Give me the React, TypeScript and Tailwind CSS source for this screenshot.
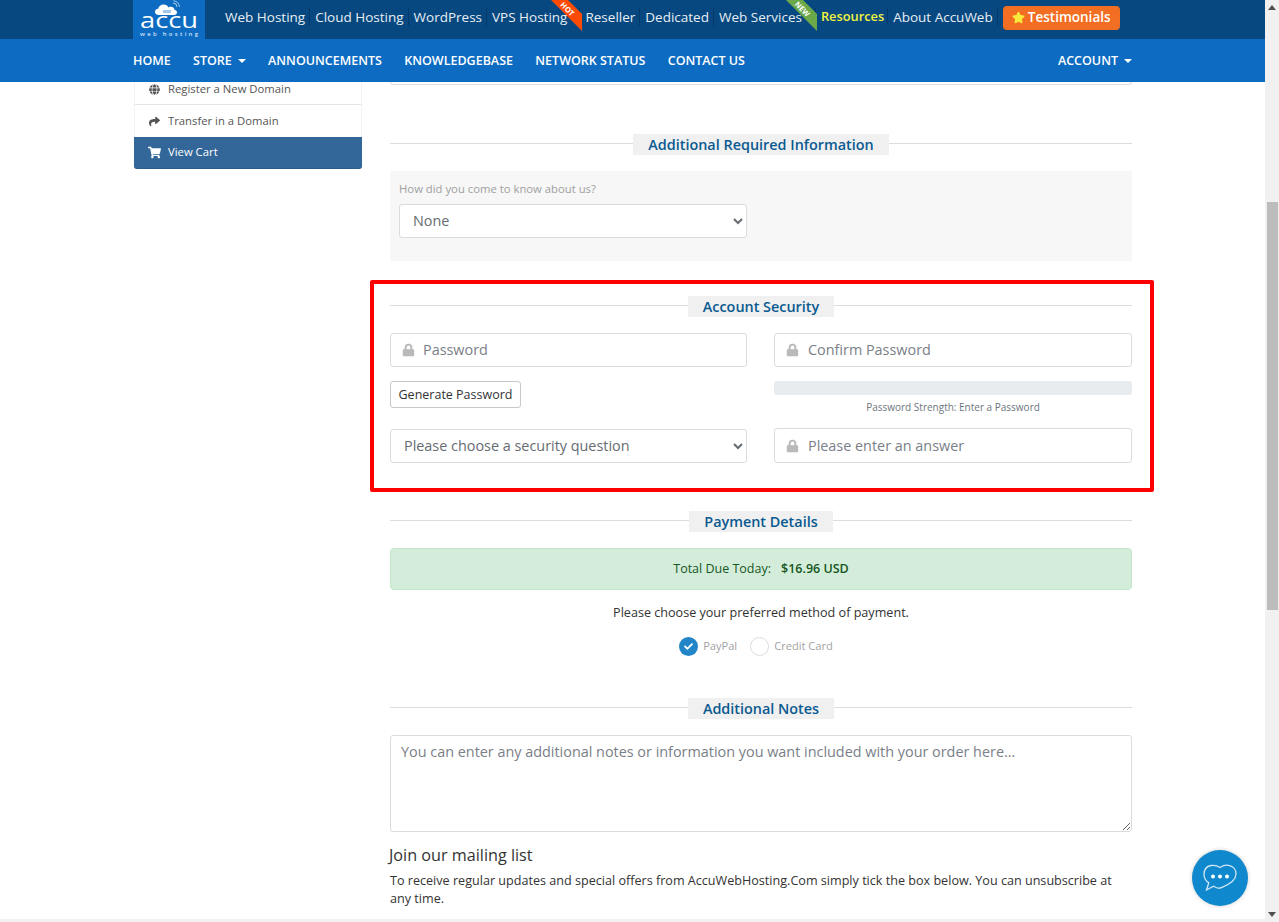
import React from "react";
import { FaLock, FaGlobe, FaShare, FaShoppingCart, FaStar, FaCheck } from "react-icons/fa";

const top = [
  { t: "Web Hosting", c: "" },
  { t: "Cloud Hosting", c: "" },
  { t: "WordPress", c: "" },
  { t: "VPS Hosting", c: "pr-[12px]" },
  { t: "Reseller", c: "" },
  { t: "Dedicated", c: "" },
  { t: "Web Services", c: "pr-[13px]" },
];

function Caret() {
  return <span className="inline-block ml-[6px] align-[2px] border-t-[4px] border-x-[4px] border-t-white border-x-transparent" />;
}

function Heading({ label }: { label: string }) {
  return (
    <div className="flex items-center h-[21px]">
      <div className="flex-1 h-px bg-[#dddddd] mb-[3px]" />
      <div className="h-[21px] px-[15px] bg-[#f0f0f0] text-[14.400px] leading-[21px] font-semibold text-[#0a5a90]">{label}</div>
      <div className="flex-1 h-px bg-[#dddddd] mb-[3px]" />
    </div>
  );
}

function LockInput({ placeholder, className, inputClass }: { placeholder: string; className: string; inputClass: string }) {
  return (
    <div className={"relative " + className}>
      <FaLock className="absolute left-[12px] top-1/2 -translate-y-1/2 text-[#b9b9b9] text-[13px]" />
      <input
        placeholder={placeholder}
        className={"w-full h-full pr-3 bg-white border border-[#dcdcdc] rounded-[3px] text-[14.400px] placeholder:text-[#7a8087] outline-none " + inputClass}
      />
    </div>
  );
}

function Logo() {
  return (
    <svg viewBox="0 0 72 39" className="w-[72px] h-[39px] bg-[#0d6cc2] shrink-0">
      <path d="M26 15c-3 0-4-1.500-4-3.200 0-1.800 1.400-3 3.200-3 .4-2.600 2.800-4.400 5.300-4.400 2.300 0 4.200 1.200 5 3 .8-.5 1.500-.6 2.300-.6 2 0 3.700 1.500 3.800 3.300 1.400.2 2.400 1.200 2.400 2.500 0 1.400-1.300 2.400-3 2.400z" fill="#ffffff" />
      <rect x="30" y="10" width="8" height="3" fill="#9fc8ea" />
      <path d="M40 3a4 4 0 0 1 4 4M40.500 .8a6.500 6.500 0 0 1 6 6" stroke="#cfe3f5" strokeWidth="0.800" fill="none" />
      <text x="7" y="28" fontFamily="'Open Sans', sans-serif" fontSize="22.500" fontWeight="400" fill="#ffffff" textLength="58" lengthAdjust="spacingAndGlyphs">accu</text>
      <text x="7" y="36" fontFamily="'Open Sans', sans-serif" fontSize="6" fontWeight="600" fill="#cfe3f5" textLength="58" lengthAdjust="spacing">web hosting</text>
    </svg>
  );
}

export default function App() {
  return (
    <div className="relative flex w-[1279px] h-[922px] overflow-hidden bg-white font-['Open_Sans',sans-serif] text-[#333333]">
      <div className="w-[1265px] h-full flex flex-col">
        <header className="h-[39px] shrink-0 bg-[#06487f] pl-[133px] flex items-center relative">
          <Logo />
          <div className="flex items-center ml-[15px] -mt-[5px] text-[13.500px] text-[#e8eef4]">
            {top.map((i) => (
              <span key={i.t} className={"pl-[5px] pr-[4px] leading-[18px] border-r border-[#033a69] " + i.c}>{i.t}</span>
            ))}
            <span className="pl-[5px] pr-[3px] leading-[18px] border-r border-[#033a69] text-[12.800px] font-semibold text-[#f2f53f] -mt-[2px]">Resources</span>
            <span className="pl-[5px] pr-[4px] leading-[18px] border-r border-[#033a69]">About AccuWeb</span>
            <span className="ml-[5px] w-[117px] h-[24px] mt-[2px] pb-[2px] flex items-center justify-center gap-[3px] bg-[#f26e22] rounded-[4px] text-[13.500px] font-semibold text-white">
              <FaStar className="text-[#f7ea3a] text-[13px]" />
              Testimonials
            </span>
          </div>
          <svg className="absolute left-[550px] top-0 w-[33px] h-[32px]" viewBox="0 0 33 32">
            <polygon points="1,0 18,0 32,14 32,31" fill="#fb4b07" />
            <text x="0" y="0" transform="translate(15.500 11) rotate(45)" fontFamily="'Open Sans', sans-serif" fontSize="7.500" fontWeight="700" fill="#ffffff" textAnchor="middle">HOT</text>
          </svg>
          <svg className="absolute left-[785px] top-0 w-[33px] h-[32px]" viewBox="0 0 33 32">
            <polygon points="1,0 18,0 32,14 32,31" fill="#6ba84a" />
            <text x="0" y="0" transform="translate(15.500 11) rotate(45)" fontFamily="'Open Sans', sans-serif" fontSize="7.500" fontWeight="700" fill="#ffffff" textAnchor="middle">NEW</text>
          </svg>
        </header>
        <nav className="h-[43px] shrink-0 bg-[#0d6cc2] pl-[133px] pr-[133px] pt-[2px] flex items-center gap-[22.300px] text-[12.500px] font-semibold text-white">
          <span>HOME</span>
          <span>STORE<Caret /></span>
          <span>ANNOUNCEMENTS</span>
          <span>KNOWLEDGEBASE</span>
          <span>NETWORK STATUS</span>
          <span>CONTACT US</span>
          <span className="ml-auto">ACCOUNT<Caret /></span>
        </nav>
        <main className="flex-1 min-h-0 overflow-hidden flex pl-[134px]">
          <aside className="w-[228px] shrink-0 -mt-[8px] text-[11.300px] text-[#555555]">
            <div className="h-[31px] pl-[14px] flex items-center gap-[8px] border-x border-b border-[#f4f4f4] border-b-[#e6e6e6]">
              <FaGlobe className="text-[11px]" />Register a New Domain
            </div>
            <div className="h-[32px] pl-[14px] flex items-center gap-[8px] border-x border-[#f4f4f4]">
              <FaShare className="text-[11px]" />Transfer in a Domain
            </div>
            <div className="h-[32px] pl-[14px] flex items-center gap-[7px] bg-[#336699] rounded-b-[3px] border-b border-[#2b5a8a] text-white">
              <FaShoppingCart className="text-[13px]" />View Cart
            </div>
          </aside>
          <section className="w-[742px] ml-[28px] shrink-0">
            <div className="h-[3px] border border-t-0 border-[#dedede] rounded-b-[3px]" />
            <div className="mt-[49px]"><Heading label="Additional Required Information" /></div>
            <div className="mt-[16px] h-[90px] bg-[#f7f7f7] pl-[9px] pt-[10px]">
              <div className="text-[11.300px] leading-[16px] text-[#a0a0a0]">How did you come to know about us?</div>
              <select className="block mt-[7px] w-[348px] h-[34px] pl-[9px] pb-[2px] bg-white border border-[#dcdcdc] rounded-[3px] text-[14.400px] text-[#666c72] outline-none">
                <option>None</option>
              </select>
            </div>
            <div className="mt-[19px] -ml-[20px] w-[784px] h-[212px] border-4 border-[#ff0000] rounded-[2px] pt-[12px] pl-[16px] pr-[18px]">
              <Heading label="Account Security" />
              <div className="mt-[16px] grid grid-cols-[357px_358px] gap-x-[27px]">
                <div className="flex flex-col">
                  <LockInput placeholder="Password" className="h-[34px]" inputClass="pl-[32px] pb-[2px]" />
                  <button className="mt-[14px] pt-[1px] self-start w-[131px] h-[27px] bg-white border border-[#c8c8c8] rounded-[3px] text-[12.500px] text-[#333333]">Generate Password</button>
                  <select className="mt-[21px] h-[34px] pl-[9px] pb-[2px] bg-white border border-[#dcdcdc] rounded-[3px] text-[14.400px] text-[#666c72] outline-none">
                    <option>Please choose a security question</option>
                  </select>
                </div>
                <div className="flex flex-col">
                  <LockInput placeholder="Confirm Password" className="h-[34px]" inputClass="pl-[33px] pb-[2px]" />
                  <div className="mt-[14px] h-[14px] bg-[#e9ecef] rounded-[3px]" />
                  <div className="mt-[5px] h-[14px] text-center text-[10px] leading-[14px] text-[#6c757d]">Password Strength: Enter a Password</div>
                  <LockInput placeholder="Please enter an answer" className="mt-[14px] h-[35px]" inputClass="pl-[33px] pb-[1px]" />
                </div>
              </div>
            </div>
            <div className="mt-[19px]"><Heading label="Payment Details" /></div>
            <div className="mt-[16px] h-[42px] flex items-center justify-center gap-[10px] bg-[#d4edda] border border-[#c3e6cb] rounded-[4px] text-[12.500px] text-[#155724]">
              <span>Total Due Today:</span><strong className="font-semibold">$16.96 USD</strong>
            </div>
            <p className="mt-[13px] h-[20px] text-center text-[12.600px] leading-[20px] text-[#333333]">Please choose your preferred method of payment.</p>
            <div className="mt-[13px] h-[20px] pr-[10px] flex items-center justify-center text-[11.100px] text-[#a3a3a3]">
              <span className="w-[19px] h-[19px] rounded-full bg-[#2185c8] flex items-center justify-center"><FaCheck className="text-white text-[9px]" /></span>
              <span className="ml-[5px]">PayPal</span>
              <span className="ml-[13px] w-[19px] h-[19px] rounded-full border border-[#dddddd]" />
              <span className="ml-[5px]">Credit Card</span>
            </div>
            <div className="mt-[42px]"><Heading label="Additional Notes" /></div>
            <textarea
              placeholder="You can enter any additional notes or information you want included with your order here..."
              className="block mt-[16px] w-full h-[97px] px-[10px] py-[5px] bg-white border border-[#dcdcdc] rounded-[3px] text-[14.400px] placeholder:text-[#7a8087] outline-none"
            />
            <h3 className="mt-[11px] -ml-px h-[24px] text-[16.200px] leading-[24px] text-[#333333]">Join our mailing list</h3>
            <p className="mt-[5px] pr-[12px] text-[12.600px] leading-[18px] text-[#333333]">To receive regular updates and special offers from AccuWebHosting.Com simply tick the box below. You can unsubscribe at any time.</p>
          </section>
        </main>
        <div className="h-[3px] shrink-0 bg-[#f2f2f2]" />
      </div>
      <aside className="w-[14px] h-full bg-[#f1f1f1] flex flex-col items-center">
        <span className="mt-[5px] border-b-[5px] border-x-[4px] border-b-[#505050] border-x-transparent" />
        <div className="mt-[192px] w-[11px] h-[408px] bg-[#bcbcbc]" />
        <span className="mt-auto mb-[5px] border-t-[5px] border-x-[4px] border-t-[#505050] border-x-transparent" />
      </aside>
      <div className="absolute left-[1192px] top-[850px] w-[56px] h-[56px] rounded-full bg-[#0f88ce] flex items-center justify-center shadow-[0_0_4px_rgba(0,0,0,0.2)]">
        <svg viewBox="0 0 34 28" className="w-[34px] h-[28px]" fill="none">
          <path d="M17 3.500C14.500 1.800 11 1 8 1.500 3.500 2.300 1 6 1 10.500c0 3.700 2 6.500 4.800 8.300L3.500 26l7-3.800c1.200.6 2.500 1.300 4 1.800 1.500.5 3 0 4.500-.7C26 20.500 33 16.800 33 10c0-4.500-3-8-7.500-8.700C22.500.8 19.500 1.800 17 3.500z" stroke="#cfe6f5" strokeWidth="1.300" />
          <circle cx="10" cy="12.500" r="2" fill="#ffffff" />
          <circle cx="17" cy="12.500" r="2" fill="#ffffff" />
          <circle cx="24" cy="12.500" r="2" fill="#ffffff" />
        </svg>
      </div>
    </div>
  );
}
